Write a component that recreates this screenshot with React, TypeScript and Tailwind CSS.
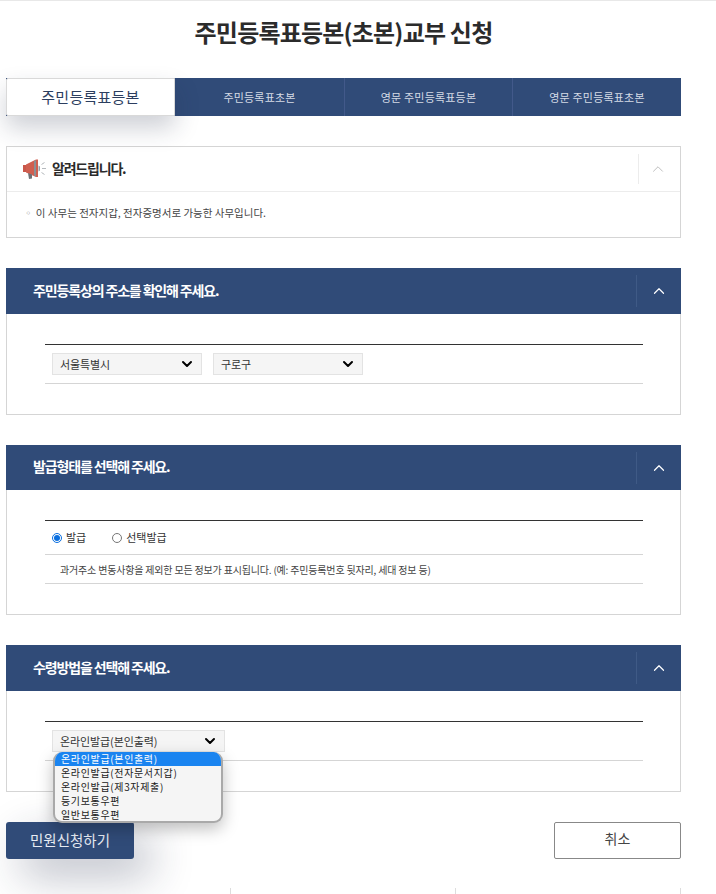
import React from 'react';
import { ChevronDown, ChevronUp } from 'lucide-react';

const font = { fontFamily: '"Noto Sans CJK KR", "Noto Sans", sans-serif' };

function Megaphone() {
  return (
    <svg width="25" height="22" viewBox="0 0 25 22" className="shrink-0">
      <path d="M1 7 L4 7 L4 14 L1 14 Z" fill="#c9574a" />
      <path d="M4 6.5 L14 1.5 L16 1.5 L16 19 L14 19 L4 14.5 Z" fill="#cf5f50" />
      <path d="M12 3 L14 2 L14 18.5 L12 17.5 Z" fill="#8b8f94" />
      <path d="M6 15 L10 16.6 L10 20.5 L7 21 Z" fill="#6d7176" />
      <path d="M16.5 7.5 L18 8.5 L18 12.5 L16.5 13.5 Z" fill="#9aa0a6" />
      <path d="M20 10.5 H24 M19.5 6.5 L22.5 4.5 M19.5 14.5 L22.5 16.5" stroke="#b5b9bd" strokeWidth="1" />
    </svg>
  );
}

function Section({ title, header, height, children }: { title: string; header: string; height: string; children: React.ReactNode }) {
  return (
    <section className="mt-[30px]">
      <div className={`flex items-center bg-[#304b78] pl-[27px] pr-[13px] ${header}`}>
        <h2 className="flex-1 pb-[2px] text-[14px] font-bold tracking-[-1.15px] text-white">{title}</h2>
        <div className="flex h-[32px] w-[32px] items-center justify-end border-l border-[#3f5a86]">
          <ChevronUp className="h-[18px] w-[18px] text-white" strokeWidth={1.6} />
        </div>
      </div>
      <div className={`border-x border-b border-[#d5d5d5] bg-white pl-[38px] pr-[37px] pt-[30px] ${height}`}>
        <div className="border-t border-[#333333]">{children}</div>
      </div>
    </section>
  );
}

function FakeSelect({ label, width }: { label: string; width: string }) {
  return (
    <div className={`flex h-[22px] items-center justify-between border border-[#e3e3e3] bg-[#f5f5f5] pl-[7px] pr-[6px] text-[11px] tracking-[-0.1px] text-[#333333] ${width}`}>
      <span>{label}</span>
      <ChevronDown className="h-[16px] w-[16px] text-black" strokeWidth={3} />
    </div>
  );
}

export default function App() {
  const options = ['온라인발급(전자문서지갑)', '온라인발급(제3자제출)', '등기보통우편', '일반보통우편'];

  return (
    <div className="relative h-[894px] w-[716px] overflow-hidden border-t border-[#e8e8e8] bg-white" style={font}>
      <div className="ml-[6px] w-[675px]">
        <h1 className="flex h-[77px] items-center justify-center pb-[16px] text-[24px] font-bold tracking-[-0.8px] text-[#2b2b2b]">
          주민등록표등본(초본)교부 신청
        </h1>

        {/* Tabs */}
        <div className="flex h-[38px] bg-[#304b78] text-[11px] tracking-[0.2px] text-[#d5dbe6]">
          <div className="flex w-[169px] items-center justify-center rounded-l-[2px] border border-[#d9d9d9] bg-white text-[15px] tracking-[0.25px] text-[#2c3e5f] shadow-[0_12px_24px_rgba(30,40,70,0.22)]">
            주민등록표등본
          </div>
          <div className="flex w-[169px] items-center justify-center">주민등록표초본</div>
          <div className="flex w-[168px] items-center justify-center border-l border-[#42598a]">영문 주민등록표등본</div>
          <div className="flex flex-1 items-center justify-center border-l border-[#42598a]">영문 주민등록표초본</div>
        </div>

        {/* Notice */}
        <div className="mt-[30px] h-[92px] border border-[#d5d5d5] bg-white">
          <div className="flex h-[45px] items-center border-b border-[#ececec] pl-[15px] pr-[13px]">
            <Megaphone />
            <span className="ml-[5px] flex-1 pb-[2px] text-[14px] font-bold tracking-[-1.2px] text-[#2b2b2b]">알려드립니다.</span>
            <div className="flex h-[30px] w-[29px] items-center justify-end border-l border-[#ececec]">
              <ChevronUp className="h-[18px] w-[18px] text-[#b8b8b8]" strokeWidth={1.2} />
            </div>
          </div>
          <p className="pl-[16px] pt-[13px] text-[10.5px] text-[#444444]">
            <span className="text-[#999999]">◦</span> 이 사무는 전자지갑, 전자증명서로 가능한 사무입니다.
          </p>
        </div>

        <Section title="주민등록상의 주소를 확인해 주세요." header="h-[46px]" height="h-[101px]">
          <div className="flex h-[39px] items-center gap-[11px] border-b border-[#d5d5d5] pl-[7px]">
            <FakeSelect label="서울특별시" width="w-[150px]" />
            <FakeSelect label="구로구" width="w-[150px]" />
          </div>
        </Section>

        <Section title="발급형태를 선택해 주세요." header="h-[45px]" height="h-[125px]">
          <div className="flex h-[34px] items-center border-b border-[#d5d5d5] pl-[7px] text-[11px] text-[#333333]">
            <input type="radio" name="kind" defaultChecked className="mr-[4px] h-[10px] w-[10px] accent-[#0a6fe0]" />
            <span>발급</span>
            <input type="radio" name="kind" className="ml-[26px] mr-[4px] h-[10px] w-[10px]" />
            <span>선택발급</span>
          </div>
          <div className="flex h-[29px] items-center border-b border-[#d5d5d5] pl-[15px] text-[10px] tracking-[-0.18px] text-[#444444]">
            과거주소 변동사항을 제외한 모든 정보가 표시됩니다. (예: 주민등록번호 뒷자리, 세대 정보 등)
          </div>
        </Section>

        <Section title="수령방법을 선택해 주세요." header="h-[46px]" height="h-[101px]">
          <div className="flex h-[39px] items-center border-b border-[#d5d5d5] pl-[7px]">
            <FakeSelect label="온라인발급(본인출력)" width="w-[173px]" />
          </div>
        </Section>

        {/* Buttons */}
        <div className="mt-[30px] flex items-start justify-between">
          <button className="h-[37px] w-[128px] rounded-[3px] bg-[#304b78] pb-[2px] text-[14.5px] text-[#e8ecf3] shadow-[16px_16px_44px_rgba(30,40,70,0.32)]">
            민원신청하기
          </button>
          <button className="h-[37px] w-[127px] rounded-[2px] border border-[#888888] bg-white pb-[4px] text-[14px] text-[#444444]">
            취소
          </button>
        </div>

        {/* Next table, cut off by the window */}
        <div className="mt-[29px] grid h-[8px] grid-cols-3 text-[0px]">
          <div className="border-r border-[#dddddd]" />
          <div className="border-r border-[#dddddd]" />
          <div className="border-r border-[#dddddd]" />
        </div>
      </div>

      {/* Open select list */}
      <div className="absolute left-[53px] top-[751px] h-[71px] w-[170px] overflow-hidden rounded-[9px] border-x-2 border-b-2 border-[#a9a9a9] bg-[#f5f5f5] text-[10px] leading-[14px] tracking-[0.65px] text-[#222222] shadow-[0_6px_16px_rgba(0,0,0,0.25)]">
        <div className="h-[14px] bg-[#1a84f0] pl-[6px] text-white">온라인발급(본인출력)</div>
        {options.map((o) => (
          <div key={o} className="h-[14px] pl-[6px]">{o}</div>
        ))}
      </div>
    </div>
  );
}
